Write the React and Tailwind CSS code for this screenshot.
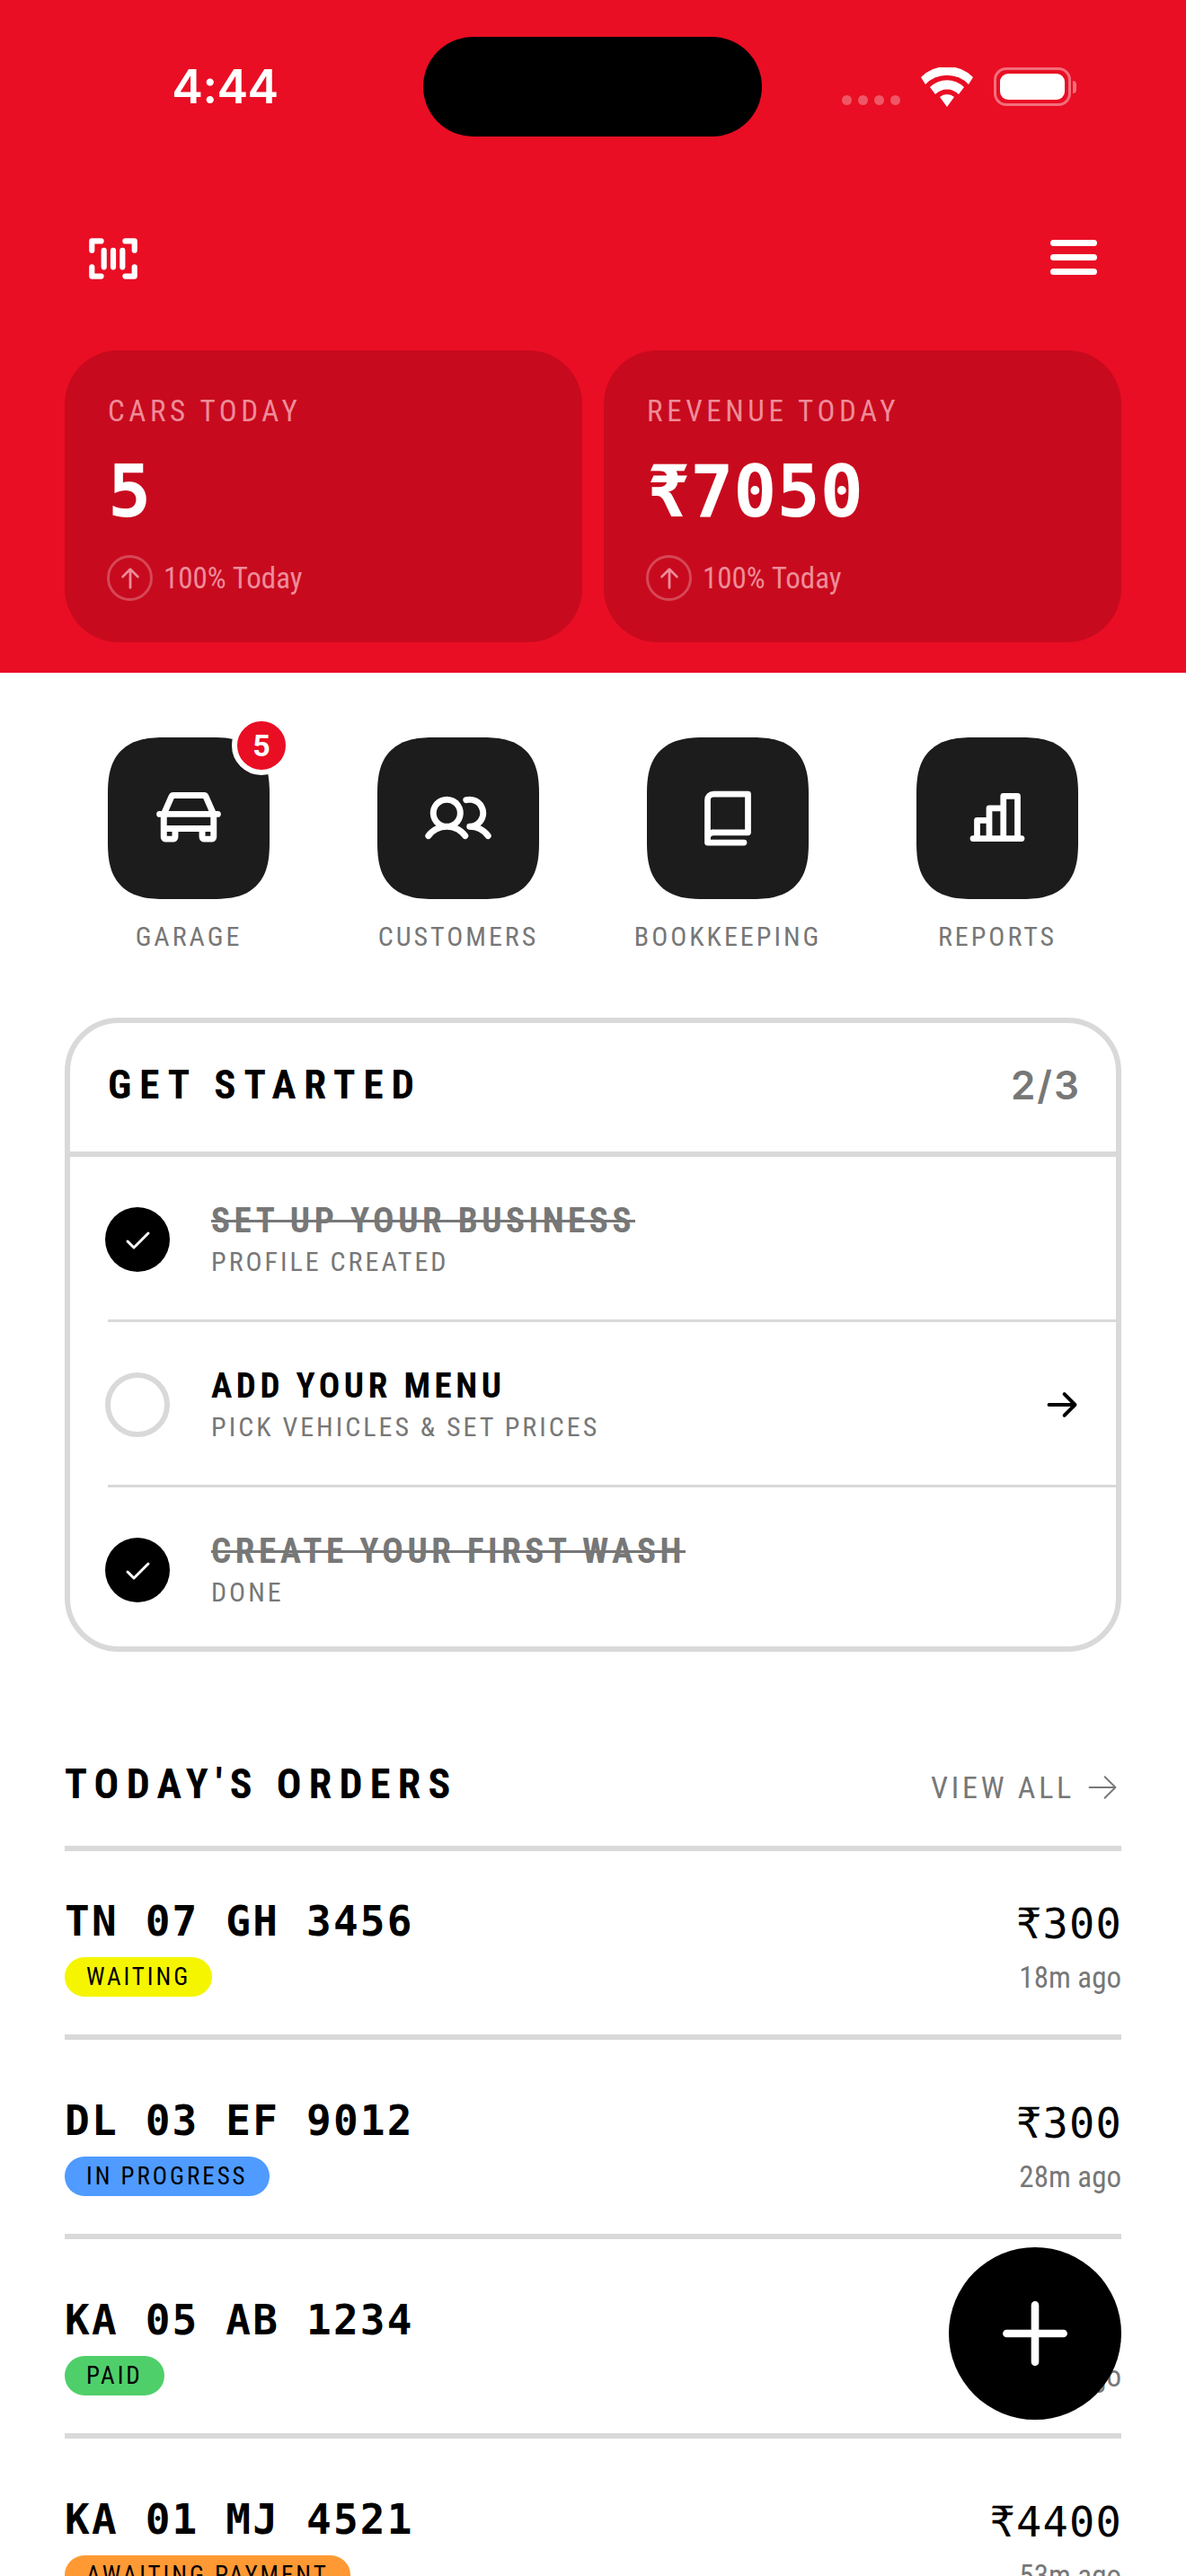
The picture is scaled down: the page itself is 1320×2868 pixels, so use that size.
import { PiBarcodeBold, PiCarBold, PiUsersBold, PiBookBold, PiChartBarBold, PiArrowUpBold, PiArrowRightBold, PiArrowRightLight, PiCheckBold, PiPlusBold } from 'react-icons/pi'

const condensed = "font-['Roboto',sans-serif] [font-stretch:75%]"
const mono = "font-['DejaVu_Sans_Mono',monospace]"

function StatusBar() {
  return (
    <div className="flex h-[194px] items-start pt-[41px]">
      <div className="flex h-[111px] w-[471px] items-center justify-center pl-[30px]">
        <span className="font-['Inter',sans-serif] text-[52px] leading-none font-semibold tracking-[-0.5px] text-white">4:44</span>
      </div>
      <div className="h-[111px] w-[377px] rounded-full bg-black" />
      <div className="flex h-[111px] items-center pl-[89px]">
        <div className="mt-[30px] flex gap-[7px]">
          {[0, 1, 2, 3].map((i) => (
            <div key={i} className="h-[11px] w-[11px] rounded-full bg-white/30" />
          ))}
        </div>
        <svg className="ml-[23px]" width="58" height="44" viewBox="0 0 58 44" fill="white">
          <path d="M29 44 21 33a12 12 0 0 1 16 0z" />
          <path d="M10 22a27 27 0 0 1 38 0l-6 8a18 18 0 0 0-26 0z" />
          <path d="M0 11a41 41 0 0 1 58 0l-5 8a33 33 0 0 0-48 0z" />
        </svg>
        <div className="ml-[23px] flex items-center">
          <div className="flex h-[43px] w-[86px] items-center justify-center rounded-[14px] border-[3px] border-white/40">
            <div className="h-[29px] w-[72px] rounded-[9px] bg-white" />
          </div>
          <div className="ml-[2px] h-[14px] w-[4px] rounded-r-full bg-white/40" />
        </div>
      </div>
    </div>
  )
}

function StatCard({ label, value }) {
  return (
    <div className="h-[325px] flex-1 rounded-[60px] bg-[#C80A1E] px-[48px] pt-[51px]">
      <div className={`${condensed} text-[33px] leading-[34px] tracking-[0.14em] text-[#EE8C99]`}>{label}</div>
      <div className={`${mono} mt-[29px] text-[80px] leading-[88px] font-bold text-white`}>{value}</div>
      <div className="mt-[26px] -ml-[1px] flex items-center gap-[12px]">
        <div className="flex h-[51px] w-[51px] items-center justify-center rounded-full border-[3px] border-white/25">
          <PiArrowUpBold size={30} color="#EE8C99" />
        </div>
        <span className={`${condensed} text-[33px] leading-[40px] text-[#EE8C99]`}>100% Today</span>
      </div>
    </div>
  )
}

function Shortcut({ label, icon, badge }) {
  return (
    <div className="flex flex-col items-center">
      <div className="relative flex h-[180px] w-[180px] items-center justify-center rounded-[64px] bg-[#1C1C1C] text-white [corner-shape:superellipse(1.4)]">
        {icon}
        {badge && (
          <div className="absolute top-[-24px] right-[-24px] flex h-[66px] w-[66px] items-center justify-center rounded-full border-[6px] border-white bg-[#E90E24] font-['Roboto',sans-serif] text-[34px] font-bold text-white">
            {badge}
          </div>
        )}
      </div>
      <div className={`${condensed} mt-[24px] text-[30px] leading-[36px] tracking-[0.1em] text-[#777777]`}>{label}</div>
    </div>
  )
}

function Task({ title, sub, done, height, last, arrow }) {
  return (
    <div className={`ml-[42px] flex items-start pt-[56px] ${height} ${last ? '' : 'border-b-[3px] border-[#D9D9D9]'}`}>
      {done ? (
        <div className="-ml-[3px] flex h-[72px] w-[72px] shrink-0 items-center justify-center rounded-full bg-black text-white">
          <PiCheckBold size={32} />
        </div>
      ) : (
        <div className="-ml-[3px] h-[72px] w-[72px] shrink-0 rounded-full border-[6px] border-[#D9D9D9]" />
      )}
      <div className="-mt-[5px] ml-[46px] flex-1">
        <div className={`${condensed} text-[39px] leading-[40px] font-bold tracking-[0.117em] ${done ? 'text-[#777777] line-through' : 'text-black'}`}>{title}</div>
        <div className={`${condensed} mt-[9px] text-[30px] leading-[34px] tracking-[0.1em] text-[#777777]`}>{sub}</div>
      </div>
      {arrow && <PiArrowRightBold size={42} className="mt-[15px] mr-[39px] text-black" />}
    </div>
  )
}

function Order({ plate, status, color, price, age, first }) {
  return (
    <div className={`flex justify-between border-b-[6px] border-[#D9D9D9] ${first ? 'h-[210px] pt-[48px]' : 'h-[222px] pt-[60px]'}`}>
      <div>
        <div className={`${mono} text-[46px] leading-[60px] font-bold tracking-[2.2px] text-black`}>{plate}</div>
        <div className={`${condensed} mt-[10px] inline-block h-[44px] rounded-full px-[24px] text-[27px] leading-[44px] tracking-[0.11em] text-black ${color}`}>{status}</div>
      </div>
      <div className="mt-[3px] flex flex-col items-end">
        <div className={`${mono} -mr-[1px] text-[47px] leading-[60px] tracking-[1.2px] text-black`}>{price}</div>
        <div className={`${condensed} mt-[7px] text-[33px] leading-[46px] text-[#777777]`}>{age}</div>
      </div>
    </div>
  )
}

export default function App() {
  return (
    <div className="relative h-[2868px] w-[1320px] overflow-hidden bg-white">
      <div className="h-[749px] bg-[#E90E24]">
        <StatusBar />
        <div className="flex h-[196px] items-start justify-between pt-[71px] pr-[99px] pl-[93px] text-white">
          <PiBarcodeBold size={66} className="mt-[-10px]" />
          <svg width="52" height="39" viewBox="0 0 52 39" className="mt-[2px]">
            <path d="M3.5 3.5h45M3.5 19.5h45M3.5 35.5h45" stroke="white" strokeWidth="7" strokeLinecap="round" />
          </svg>
        </div>
        <div className="flex gap-[24px] px-[72px]">
          <StatCard label="CARS TODAY" value="5" />
          <StatCard label="REVENUE TODAY" value="₹7050" />
        </div>
      </div>

      <div className="mt-[72px] grid grid-cols-4 px-[60px]">
        <Shortcut label="GARAGE" icon={<PiCarBold size={74} />} badge="5" />
        <Shortcut label="CUSTOMERS" icon={<PiUsersBold size={74} />} />
        <Shortcut label="BOOKKEEPING" icon={<PiBookBold size={72} />} />
        <Shortcut label="REPORTS" icon={<PiChartBarBold size={72} />} />
      </div>

      <div className="mx-[72px] mt-[72px] rounded-[60px] border-[6px] border-[#D9D9D9]">
        <div className="flex h-[149px] items-center justify-between border-b-[6px] border-[#D9D9D9] px-[42px] pb-[6px]">
          <span className={`${condensed} text-[45px] font-bold tracking-[0.2em] text-black`}>GET STARTED</span>
          <span className="-mr-[3px] font-['Inter',sans-serif] text-[44px] font-semibold tracking-[2px] text-[#777777]">2/3</span>
        </div>
        <Task title="SET UP YOUR BUSINESS" sub="PROFILE CREATED" done height="h-[184px]" />
        <Task title="ADD YOUR MENU" sub="PICK VEHICLES & SET PRICES" height="h-[184px]" arrow />
        <Task title="CREATE YOUR FIRST WASH" sub="DONE" done height="h-[177px]" last />
      </div>

      <div className="mx-[72px] mt-[122px]">
        <div className="flex h-[100px] items-start justify-between border-b-[6px] border-[#D9D9D9]">
          <span className={`${condensed} text-[46px] leading-[50px] font-bold tracking-[0.18em] text-black`}>TODAY'S ORDERS</span>
          <span className={`${condensed} mt-[4px] flex items-center gap-[10px] text-[34px] leading-[50px] tracking-[0.11em] text-[#777777]`}>
            VIEW ALL <PiArrowRightLight size={42} />
          </span>
        </div>
        <Order first plate="TN 07 GH 3456" status="WAITING" color="bg-[#F5F500]" price="₹300" age="18m ago" />
        <Order plate="DL 03 EF 9012" status="IN PROGRESS" color="bg-[#4F9BFF]" price="₹300" age="28m ago" />
        <Order plate="KA 05 AB 1234" status="PAID" color="bg-[#4FCF6A]" price="₹300" age="38m ago" />
        <Order plate="KA 01 MJ 4521" status="AWAITING PAYMENT" color="bg-[#FF9933]" price="₹4400" age="53m ago" />
      </div>

      <div className="absolute top-[2502px] left-[1056px] flex h-[192px] w-[192px] items-center justify-center rounded-full bg-black text-white">
        <PiPlusBold size={92} />
      </div>
    </div>
  )
}
